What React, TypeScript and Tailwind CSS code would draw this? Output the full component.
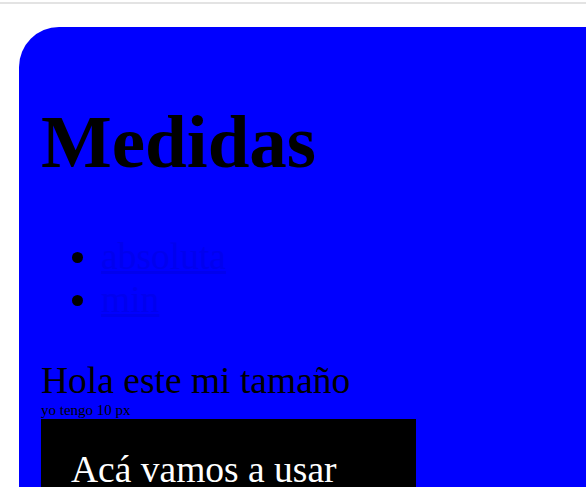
export default function App() {
    return (
        <div className="h-[487px] overflow-hidden bg-white font-['Liberation_Serif',serif] text-black">
            {/* top rule */}
            <div className="mt-[2px] h-[2px] bg-[#e3e3e3]" />

            {/* blue card */}
            <div className="ml-[19px] mt-[23px] w-[700px] rounded-tl-[40px] bg-[#0000ff] p-[22px]">
                <h1 className="my-[50px] text-[75px] leading-[1.149] font-bold">Medidas</h1>

                <ul className="my-[37.5px] list-disc pl-[60px] text-[37.5px] leading-[1.149]">
                    <li>
                        <a href="#" className="text-[#0000ee] underline">absoluta</a>
                    </li>
                    <li>
                        <a href="#" className="text-[#0000ee] underline">min</a>
                    </li>
                </ul>

                <p className="mt-[37.5px] text-[37.5px] leading-[1.149]">Hola este mi tamaño</p>
                <p className="text-[15px] leading-[1.149]">yo tengo 10 px</p>

                <div className="w-[375px] bg-black px-[30px] pt-[29px]">
                    <p className="text-[37.5px] leading-[1.149] text-white">Acá vamos a usar</p>
                </div>
            </div>
        </div>
    );
}
